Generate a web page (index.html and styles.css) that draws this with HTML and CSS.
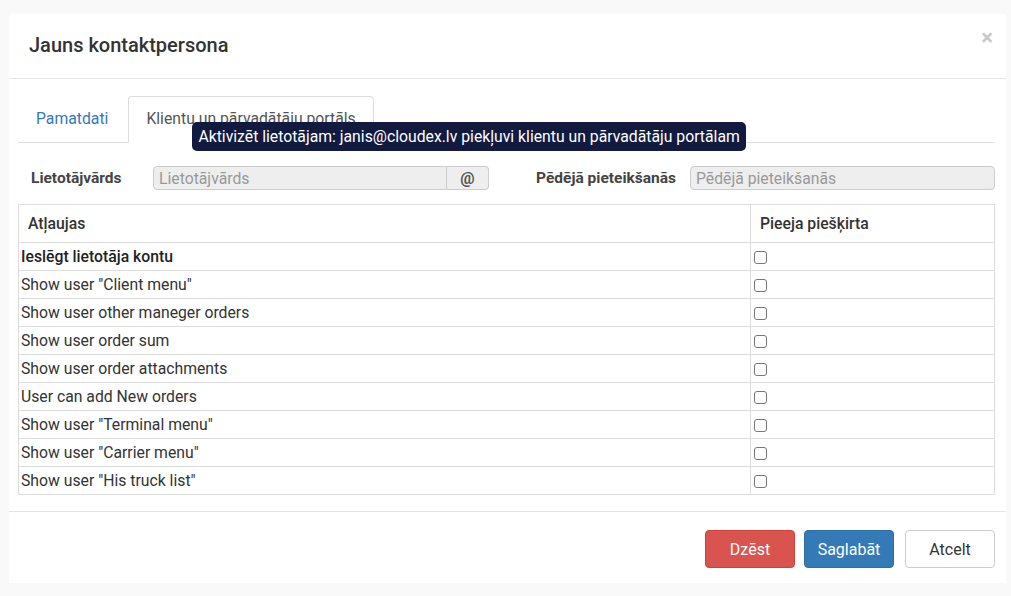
FILE: index.html
```html
<!DOCTYPE html>
<html lang="lv">
<head>
<meta charset="utf-8">
<title>Jauns kontaktpersona</title>
<link rel="stylesheet" href="styles.css">
</head>
<body>
<div class="modal">
  <div class="modal-header">
    <h4 class="modal-title">Jauns kontaktpersona</h4>
    <span class="close">×</span>
  </div>
  <div class="modal-body">
    <ul class="nav-tabs">
      <li class="tab"><a>Pamatdati</a></li>
      <li class="tab active"><a>Klientu un pārvadātāju portāls</a>
        <div class="tooltip">Aktivizēt lietotājam: janis@cloudex.lv piekļuvi klientu un pārvadātāju portālam</div>
      </li>
    </ul>
    <div class="form-row">
      <label class="lbl lbl-left">Lietotājvārds</label>
      <div class="input-group">
        <input class="field" type="text" placeholder="Lietotājvārds" disabled>
        <span class="addon">@</span>
      </div>
      <label class="lbl lbl-right">Pēdējā pieteikšanās</label>
      <input class="field field-last" type="text" placeholder="Pēdējā pieteikšanās" disabled>
    </div>
    <table class="perm">
      <thead>
        <tr><th class="c1">Atļaujas</th><th class="c2">Pieeja piešķirta</th></tr>
      </thead>
      <tbody>
        <tr><td class="strong">Ieslēgt lietotāja kontu</td><td><span class="cb"></span></td></tr>
        <tr><td>Show user "Client menu"</td><td><span class="cb"></span></td></tr>
        <tr><td>Show user other maneger orders</td><td><span class="cb"></span></td></tr>
        <tr><td>Show user order sum</td><td><span class="cb"></span></td></tr>
        <tr><td>Show user order attachments</td><td><span class="cb"></span></td></tr>
        <tr><td>User can add New orders</td><td><span class="cb"></span></td></tr>
        <tr><td>Show user "Terminal menu"</td><td><span class="cb"></span></td></tr>
        <tr><td>Show user "Carrier menu"</td><td><span class="cb"></span></td></tr>
        <tr><td>Show user "His truck list"</td><td><span class="cb"></span></td></tr>
      </tbody>
    </table>
  </div>
  <div class="modal-footer">
    <button class="btn btn-danger">Dzēst</button>
    <button class="btn btn-primary">Saglabāt</button>
    <button class="btn btn-default">Atcelt</button>
  </div>
</div>
</body>
</html>
```
FILE: styles.css
```css
* { box-sizing: border-box; }
html, body { margin: 0; }
body {
  background: #f9f9f9;
  font-family: Roboto, "Liberation Sans", Arial, sans-serif;
  font-size: 15.75px;
  color: #333;
  padding: 14px 5px 13px 9px;
}
.modal {
  background: #fff;
  width: 997px;
  height: 569px;
  display: flex;
  flex-direction: column;
}
.modal-header {
  height: 65px;
  border-bottom: 1px solid #e5e5e5;
  display: flex;
  align-items: center;
  justify-content: space-between;
  padding: 0 13px 0 20px;
}
.modal-title {
  margin: 0;
  font-size: 20px;
  font-weight: 500;
  color: #333;
  padding-bottom: 3px;
}
.close {
  font-size: 22px;
  font-weight: 700;
  color: #c8c8c8;
  line-height: 1;
  padding-bottom: 16px;
}
.modal-body {
  flex: 1;
  padding: 17px 11px 0 9px;
}
.nav-tabs {
  list-style: none;
  margin: 0;
  padding: 0;
  display: flex;
  border-bottom: 1px solid #ddd;
  height: 47px;
}
.tab {
  position: relative;
  margin-right: 2px;
}
.tab a {
  display: block;
  padding: 11px 17px 11px;
  line-height: 22px;
  border: 1px solid transparent;
  border-radius: 4px 4px 0 0;
  color: #337ab7;
}
.tab.active a {
  color: #555;
  background: #fff;
  border-color: #ddd #ddd transparent;
  height: 47px;
}
.tooltip {
  position: absolute;
  left: 64px;
  top: 26px;
  white-space: nowrap;
  background: #121a3f;
  color: #fff;
  font-size: 15.75px;
  line-height: 19px;
  padding: 5px 6px;
  border-radius: 5px;
  z-index: 2;
}
.form-row {
  display: flex;
  align-items: center;
  margin-top: 23px;
  height: 24px;
}
.lbl {
  font-weight: 700;
  color: #444;
  font-size: 15.5px;
}
.lbl-left {
  width: 135px;
  padding-left: 13px;
}
.input-group {
  width: 336px;
  display: flex;
  height: 24px;
}
.field {
  font-family: inherit;
  font-size: 15.75px;
  height: 24px;
  background: #eee;
  border: 1px solid #ccc;
  border-radius: 4px;
  padding: 0 5px;
  color: #999;
  margin: 0;
}
.field::placeholder { color: #999; }
.input-group .field {
  flex: 1;
  border-radius: 4px 0 0 4px;
  min-width: 0;
}
.addon {
  width: 42px;
  background: #eee;
  border: 1px solid #ccc;
  border-left: 0;
  border-radius: 0 4px 4px 0;
  display: flex;
  align-items: center;
  justify-content: center;
  font-weight: 700;
  color: #555;
  font-size: 16px;
}
.lbl-right {
  width: 201px;
  text-align: right;
  padding-right: 14px;
}
.field-last { flex: 1; }
.perm {
  margin-top: 14px;
  width: 977px;
  border-collapse: collapse;
}
.perm th, .perm td {
  border: 1px solid #ddd;
  text-align: left;
}
.perm th {
  font-weight: 500;
  height: 38px;
  padding: 0 9px;
  color: #333;
}
.perm th.c1 { width: 732px; }
.perm td {
  height: 28px;
  padding: 0 2px;
  vertical-align: middle;
  color: #333;
}
.perm td.strong { font-weight: 500; color: #222; }
.cb {
  display: block;
  width: 13px;
  height: 13px;
  border: 1px solid #767676;
  border-radius: 3px;
  margin-left: 1px;
  margin-top: 1px;
}
.modal-footer {
  border-top: 1px solid #e5e5e5;
  height: 72px;
  display: flex;
  justify-content: flex-end;
  align-items: flex-start;
  padding: 18px 11px 0 0;
}
.btn {
  font-family: inherit;
  font-size: 16px;
  width: 90px;
  height: 38px;
  border-radius: 4px;
  border: 1px solid transparent;
  cursor: pointer;
  margin: 0;
}
.btn-primary { margin-left: 9px; }
.btn-default { margin-left: 11px; }
.btn-danger { background: #d9534f; border-color: #d43f3a; color: #fff; }
.btn-primary { background: #337ab7; border-color: #2e6da4; color: #fff; }
.btn-default { background: #fff; border-color: #ccc; color: #333; }
```
